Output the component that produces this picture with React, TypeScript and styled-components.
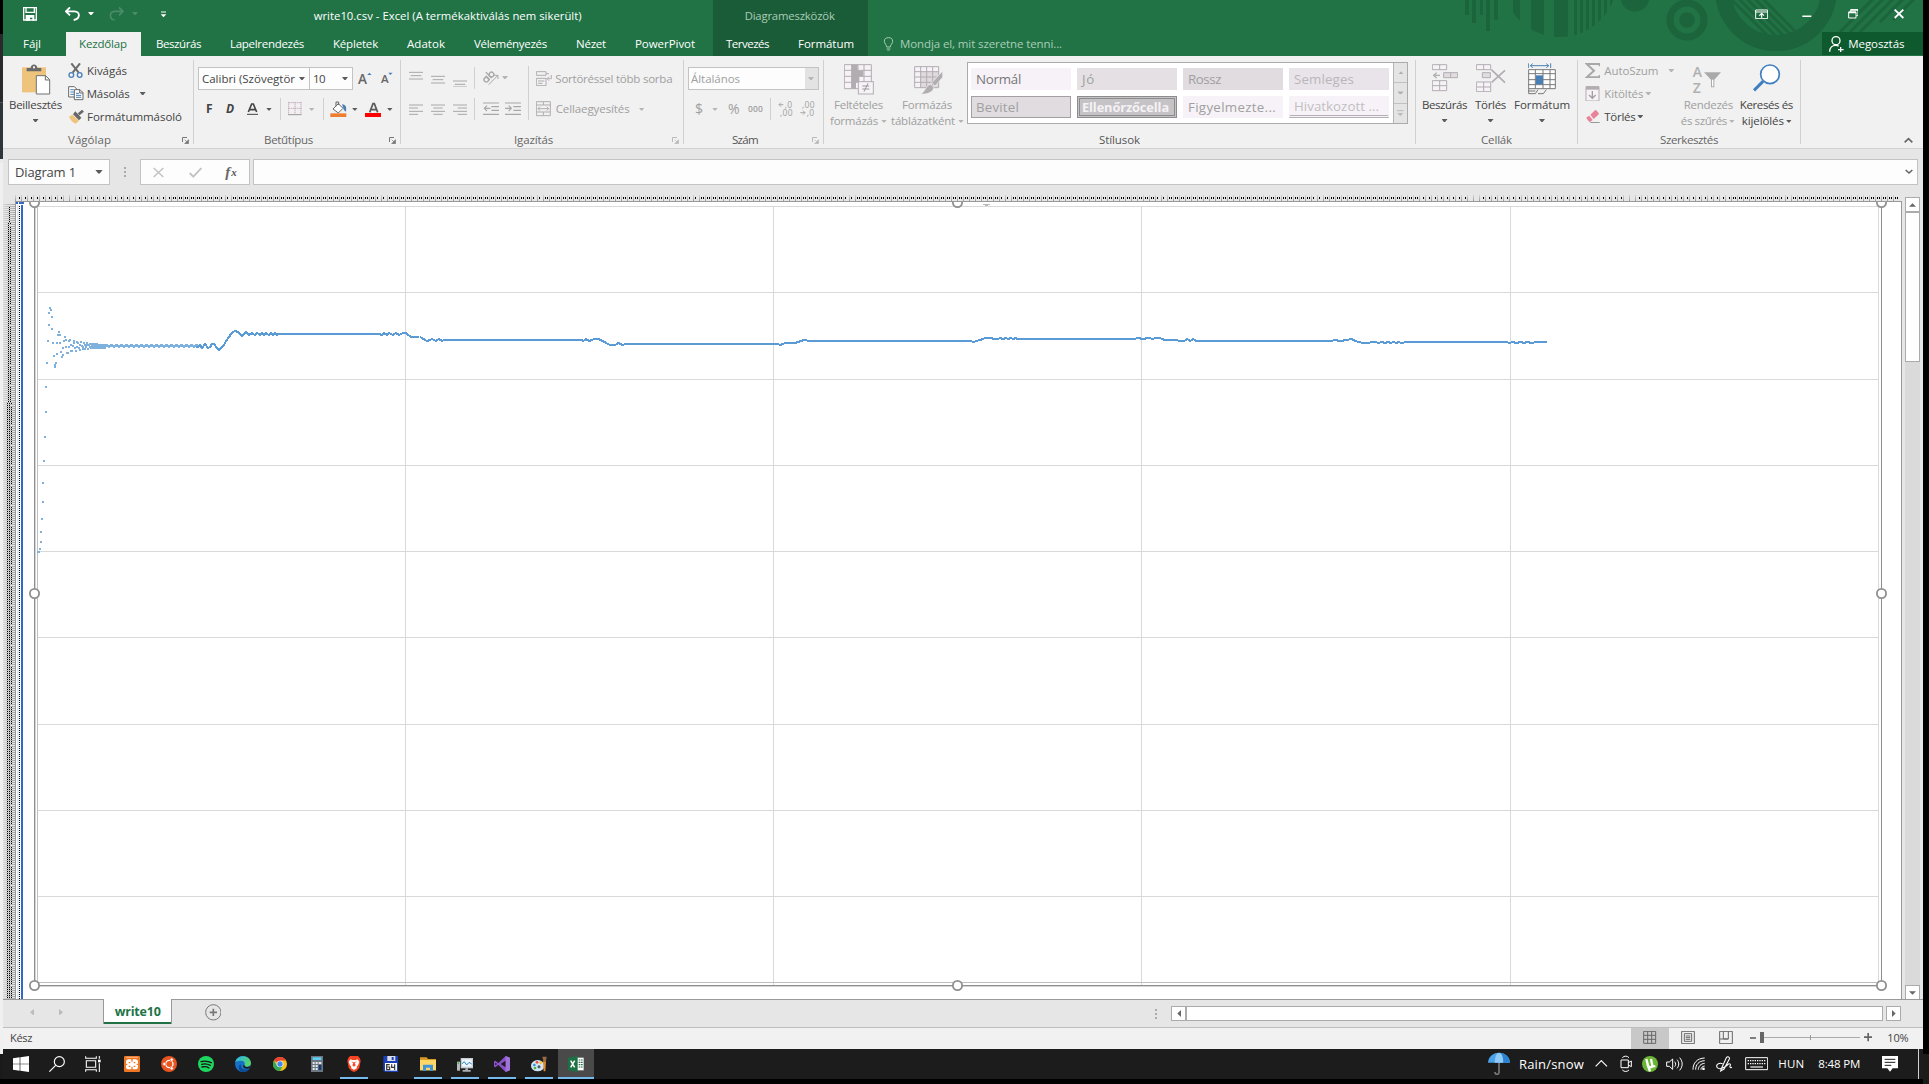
import React, { useLayoutEffect, useRef, useState, ReactNode } from "react";
import styled, { createGlobalStyle, css } from "styled-components";

const Global = createGlobalStyle`
  html, body { margin: 0; padding: 0; background: #000; overflow: hidden; }
  * { box-sizing: border-box; }
  svg { display: block; flex: none; }
`;

const UI = `"Open Sans", "Noto Sans", sans-serif`;

/* ---------- text fitted to a column width ---------- */

const TextBox = styled.span<{ $w: number; $s?: number; $c?: string; $b?: number; $i?: boolean; $ml?: number; $f?: string; $lh?: number }>`
  display: block;
  flex: none;
  width: ${(p) => p.$w}px;
  margin-left: ${(p) => p.$ml ?? 0}px;
  font-family: ${(p) => p.$f ?? UI};
  font-size: ${(p) => p.$s ?? 11.5}px;
  font-weight: ${(p) => p.$b ?? 400};
  font-style: ${(p) => (p.$i ? "italic" : "normal")};
  line-height: ${(p) => p.$lh ?? 16}px;
  color: ${(p) => p.$c ?? "#444"};
  white-space: nowrap;
`;

type TProps = { w: number; s?: number; c?: string; b?: number; i?: boolean; ml?: number; f?: string; lh?: number; children: string };

function T({ w, s, c, b, i, ml, f, lh, children }: TProps) {
  const ref = useRef<HTMLSpanElement>(null);
  const [ls, setLs] = useState(0);
  useLayoutEffect(() => {
    if (ref.current) {
      const natural = ref.current.getBoundingClientRect().width;
      setLs((w - natural) / children.length);
    }
  }, []);
  return (
    <TextBox $w={w} $s={s} $c={c} $b={b} $i={i} $ml={ml} $f={f} $lh={lh}>
      <span ref={ref} style={{ letterSpacing: ls }}>
        {children}
      </span>
    </TextBox>
  );
}

/* Icon artwork is drawn on a grid three times finer than the screen. */
const Svg = styled.svg<{ $ml?: number; $mt?: number }>`
  margin-left: ${(p) => p.$ml ?? 0}px;
  margin-top: ${(p) => p.$mt ?? 0}px;
`;
function Icon({ box, ml, mt, children }: { box: number[]; ml?: number; mt?: number; children: ReactNode }) {
  return (
    <Svg $ml={ml} $mt={mt} width={box[2] / 3} height={box[3] / 3} viewBox={box.join(" ")} fill="none">
      {children}
    </Svg>
  );
}

const Arrow = styled.i<{ $ml?: number; $c?: string; $mt?: number; $big?: boolean }>`
  display: block;
  flex: none;
  width: ${(p) => (p.$big ? 8 : 6)}px;
  height: ${(p) => (p.$big ? 4 : 3)}px;
  margin-left: ${(p) => p.$ml ?? 0}px;
  margin-top: ${(p) => p.$mt ?? 0}px;
  background: ${(p) => p.$c ?? "#5c5c5c"};
  clip-path: polygon(0 0, 100% 0, 60% 100%, 40% 100%);
`;

/* ---------- frame ---------- */

const Screen = styled.div`
  display: flex;
  width: 1929px;
  height: 1084px;
  background: #000;
  overflow: hidden;
  font-family: ${UI};
`;
const LeftEdge = styled.div`
  width: 3px;
  height: 1079px;
  background: linear-gradient(#000 0 34px, #2a2a2c 34px 102px, #50565c 102px 103px, #30353a 103px 159px, #e9e9e9 159px 163px, #f0f0f0 163px 1054px, #1a1a1a 1054px);
`;
const RightEdge = styled.div`
  width: 6px;
  height: 1084px;
  background: linear-gradient(#000 0 1054px, #1b1b1b 1054px);
`;
const Window = styled.div`
  display: flex;
  flex-direction: column;
  width: 1920px;
  height: 1079px;
  background: #e6e6e6;
`;

/* ---------- title and tabs ---------- */

const Header = styled.header`
  position: relative;
  height: 56px;
  background: #217346;
`;
const Decor = styled.svg`
  position: absolute;
  left: 1457px;
  top: 0;
`;
const HeadRow = styled.div<{ $h: number }>`
  position: relative;
  display: flex;
  align-items: center;
  height: ${(p) => p.$h}px;
`;
const ToolTabs = styled.div<{ $ml: number; $h: number; $pt?: number }>`
  display: flex;
  align-items: center;
  width: 155px;
  height: ${(p) => p.$h}px;
  margin-left: ${(p) => p.$ml}px;
  padding-top: ${(p) => p.$pt ?? 0}px;
  background: #1b5c38;
`;
const ActiveTab = styled.div`
  display: flex;
  align-items: center;
  width: 75px;
  height: 24px;
  margin-left: 25px;
  padding-left: 13px;
  background: #f1f1f1;
`;
const Share = styled.div`
  display: flex;
  align-items: center;
  align-self: flex-start;
  width: 101px;
  height: 23px;
  margin-left: auto;
  padding-left: 7px;
  background: #0e5a2e;
`;

function TitleArt() {
  const stripes = [1513, 1531, 1554, 1574, 1580, 1586, 1592, 1598, 1604, 1610];
  const widths = [7, 13, 14, 3, 3, 3, 3, 3, 3, 3];
  return (
    <Decor width="463" height="56" viewBox="1460 0 463 56" fill="#1c643c">
      <clipPath id="disc"><circle cx="1560" cy="-20" r="57" /></clipPath>
      <clipPath id="inner"><circle cx="1776" cy="-10" r="57" /></clipPath>
      <clipPath id="cut"><rect x="1460" y="0" width="463" height="51" /></clipPath>
      <path d="M1465 0h4v15h-4zM1472 0h4v23h-4zM1480 0h3v15h-3zM1486 0h4v31h-4zM1494 0h4v20h-4z" />
      <g clipPath="url(#disc)">
        {stripes.map((x, i) => <rect key={x} x={x} y="0" width={widths[i]} height="56" />)}
      </g>
      <circle cx="1635" cy="-3" r="14.5" />
      <circle cx="1687" cy="20" r="17" fill="none" stroke="#1c643c" strokeWidth="7" />
      <circle cx="1687" cy="20" r="7.7" />
      <g clipPath="url(#cut)">
        <circle cx="1776" cy="-10" r="53" fill="none" stroke="#1c643c" strokeWidth="16" />
      </g>
      <g clipPath="url(#inner)" stroke="#1c643c" strokeWidth="3">
        <path d="M1728 -4l60 60M1736 -4l60 60M1744 -4l60 60M1752 -4l60 60M1760 -4l60 60" />
      </g>
      <g stroke="#1c643c" strokeWidth="3">
        <path d="M1840 32l34-34M1850 32l34-34M1860 32l34-34M1880 22l24-24M1893 20l22-22" />
      </g>
    </Decor>
  );
}

function TopBar() {
  const w = "#fff";
  return (
    <Header>
      <TitleArt />
      <HeadRow $h={32}>
        <Icon box={[69, 22, 42, 42]} ml={20} mt={-4}>
          <path d="M71 24h38v37h-38zM78 24v14h25v-14" stroke={w} strokeWidth="4" />
          <path d="M77 46h26v17h-6v-9h-7v9h-13z" fill={w} />
        </Icon>
        <Icon box={[197, 20, 45, 42]} ml={28} mt={-5}>
          <path d="M212 21l-12 12 12 12M201 33h24c20 0 17 24-2 26" stroke={w} strokeWidth="5.5" />
        </Icon>
        <Arrow $ml={8} $c={w} $mt={-5} />
        <Icon box={[328, 20, 45, 42]} ml={15} mt={-5}>
          <path d="M358 21l12 12-12 12M369 33h-24c-18 0-16 24 0 26" stroke="#4b8c68" strokeWidth="5" />
        </Icon>
        <Arrow $ml={8} $c="#4b8c68" $mt={-5} />
        <Icon box={[480, 32, 20, 21]} ml={22} mt={-4}>
          <path d="M483 35h15" stroke={w} strokeWidth="3" /><path d="M482 42h17l-8.500 9z" fill={w} />
        </Icon>
        <T w={268} ml={147} s={11.3} c={w}>write10.csv - Excel (A termékaktiválás nem sikerült)</T>
        <ToolTabs $ml={131} $h={32}><T w={90} ml={32} s={11.3} c="#a9cdb6">Diagrameszközök</T></ToolTabs>
        <Icon box={[555, 26, 40, 32]} ml={887} mt={-4}>
          <path d="M557 29h36v26h-36zM557 35h36" stroke={w} strokeWidth="3" /><path d="M575 52v-11M568 46l7-7 7 7" stroke={w} strokeWidth="3.500" />
        </Icon>
        <Icon box={[698, 44, 29, 8]} ml={34} mt={0}><path d="M699 48h27" stroke={w} strokeWidth="5" /></Icon>
        <Icon box={[836, 27, 32, 30]} ml={36} mt={-4}>
          <path d="M838 36h22v18h-22zM844 35v-6h22v18h-5" stroke={w} strokeWidth="3" /><path d="M838 37h22M844 30h22" stroke={w} strokeWidth="5" />
        </Icon>
        <Icon box={[975, 28, 30, 29]} ml={36} mt={-4}><path d="M977 30l26 25M1003 30l-26 25" stroke={w} strokeWidth="5.500" /></Icon>
      </HeadRow>
      <HeadRow $h={24}>
        <T w={18} ml={20} c={w}>Fájl</T>
        <ActiveTab><T w={48} c="#217346">Kezdőlap</T></ActiveTab>
        <T w={45} ml={15} c={w}>Beszúrás</T>
        <T w={74} ml={29} c={w}>Lapelrendezés</T>
        <T w={45} ml={29} c={w}>Képletek</T>
        <T w={38} ml={29} c={w}>Adatok</T>
        <T w={73} ml={29} c={w}>Véleményezés</T>
        <T w={30} ml={29} c={w}>Nézet</T>
        <T w={60} ml={29} c={w}>PowerPivot</T>
        <ToolTabs $ml={18} $h={24}>
          <T w={43} ml={13} c={w}>Tervezés</T>
          <T w={56} ml={29} c={w}>Formátum</T>
        </ToolTabs>
        <Icon box={[190, 107, 33, 44]} ml={15}>
          <path d="M201 137c0-7-7-10-7-17a12.500 11 0 0 1 25 0c0 7-7 10-7 17zM201 143h11M203 149h7" stroke="#a9cdb6" strokeWidth="3" />
        </Icon>
        <T w={162} ml={6} c="#a9cdb6">Mondja el, mit szeretne tenni...</T>
        <Share>
          <Icon box={[777, 108, 46, 48]}>
            <circle cx="798" cy="122" r="12" stroke={w} strokeWidth="4" /><path d="M779 155c0-12 8-19 18-19 4 0 7 1 9 3M812 141v15M804 149h17" stroke={w} strokeWidth="4" />
          </Icon>
          <T w={56} ml={4} c={w}>Megosztás</T>
        </Share>
      </HeadRow>
    </Header>
  );
}

/* ---------- ribbon ---------- */

const Ribbon = styled.section`
  display: flex;
  height: 93px;
  background: #f1f1f1;
  border-bottom: 1px solid #d2d2d2;
`;
const Group = styled.div<{ $w: number }>`
  display: flex;
  flex-direction: column;
  flex: none;
  width: ${(p) => p.$w}px;
`;
const Sep = styled.i<{ $h: number; $mt?: number; $ml?: number }>`
  display: block;
  flex: none;
  width: 1px;
  height: ${(p) => p.$h}px;
  margin-top: ${(p) => p.$mt ?? 0}px;
  margin-left: ${(p) => p.$ml ?? 0}px;
  background: #d0d0d0;
`;
const Body = styled.div`
  display: flex;
  height: 76px;
`;
const Foot = styled.div`
  display: flex;
  align-items: center;
  height: 16px;
  padding-right: 4px;
`;
const Col = styled.div<{ $pt?: number; $ml?: number; $w?: number; $center?: boolean }>`
  display: flex;
  flex-direction: column;
  flex: none;
  ${(p) => p.$w && css`width: ${p.$w}px;`}
  ${(p) => p.$center && css`align-items: center;`}
  padding-top: ${(p) => p.$pt ?? 0}px;
  margin-left: ${(p) => p.$ml ?? 0}px;
`;
const Row = styled.div<{ $h: number; $mt?: number }>`
  display: flex;
  align-items: center;
  flex: none;
  height: ${(p) => p.$h}px;
  margin-top: ${(p) => p.$mt ?? 0}px;
`;
const Field = styled.div<{ $w: number; $ml?: number; $pl: number }>`
  display: flex;
  align-items: center;
  flex: none;
  width: ${(p) => p.$w}px;
  height: 23px;
  margin-left: ${(p) => p.$ml ?? 0}px;
  padding-left: ${(p) => p.$pl}px;
  background: #fdfdfd;
  border: 1px solid #c3c3c3;
`;
const DropZone = styled.div`
  display: flex;
  align-items: center;
  width: 13px;
  height: 21px;
  margin-left: auto;
  padding-left: 3px;
  background: #e3e3e3;
`;
const LargeIcon = styled.div`
  display: flex;
  align-items: flex-start;
  height: 33px;
`;

const G = "#b1adb1";
const DIS = "#a0a0a0";

function Launcher({ c = "#777" }: { c?: string }) {
  return (
    <Svg $mt={1} style={{ marginLeft: "auto" }} width="7" height="7" viewBox="0 0 21 21" fill="none">
      <path d="M1.500 15V1.500H15" stroke={c} strokeWidth="3" /><path d="M19.500 8v12H8zM8 8l8 8" fill={c} stroke={c} strokeWidth="2" />
    </Svg>
  );
}

function Lines({ d, ml, h = 42 }: { d: string; ml?: number; h?: number }) {
  return <Icon box={[0, 0, 42, h]} ml={ml}><path d={d} stroke="#a8a8a8" strokeWidth="3" /></Icon>;
}

function Clipboard() {
  return (
    <Group $w={190}>
      <Body>
        <Col $w={53} $ml={6} $pt={8} $center>
          <LargeIcon>
            <Icon box={[66, 191, 92, 92]}>
              <rect x="72" y="201" width="72" height="75" fill="#eec47c" />
              <path d="M86 213v-10h12c0-14 20-14 20 0h12v10z" fill="#6a6a6a" /><rect x="105" y="198" width="6" height="6" fill="#f1f1f1" />
              <path d="M115 226h28l12 12v43h-40zM142 226v13h13" fill="#fff" stroke="#707070" strokeWidth="3" />
            </Icon>
          </LargeIcon>
          <T w={53}>Beillesztés</T>
          <Arrow $mt={6} />
        </Col>
        <Col $ml={6} $pt={3}>
          <Row $h={23}>
            <Icon box={[205, 187, 45, 45]}>
              <path d="M215 188l22 28M241 188l-22 28" stroke="#6b6b6b" strokeWidth="6" />
              <circle cx="215" cy="223" r="7" stroke="#4a7fb5" strokeWidth="4" /><circle cx="240" cy="223" r="7" stroke="#4a7fb5" strokeWidth="4" />
            </Icon>
            <T w={40} ml={4}>Kivágás</T>
          </Row>
          <Row $h={23}>
            <Icon box={[203, 258, 47, 43]}>
              <path d="M205 260h17l8 8v23h-25z" fill="#fff" stroke="#666" strokeWidth="3" />
              <path d="M210 269h10M210 276h12M210 283h12" stroke="#4a7fb5" strokeWidth="3" />
              <path d="M222 269h17l9 9v21h-26zM238 269v10h10" fill="#fff" stroke="#666" strokeWidth="3" />
              <path d="M227 280h9M227 286h16M227 292h16" stroke="#4a7fb5" strokeWidth="3" />
            </Icon>
            <T w={43} ml={3}>Másolás</T><Arrow $ml={10} />
          </Row>
          <Row $h={23}>
            <Icon box={[204, 327, 48, 42]}>
              <path d="M207 347l10-6 20 18-10 9c-8-3-15-10-20-21z" fill="#eec47c" />
              <path d="M219 340l7-9 18 19-7 8z" fill="#666" /><path d="M236 340l13-11" stroke="#666" strokeWidth="8" />
            </Icon>
            <T w={95} ml={3}>Formátummásoló</T>
          </Row>
        </Col>
      </Body>
      <Foot><T w={43} ml={65} c="#666">Vágólap</T><Launcher /></Foot>
    </Group>
  );
}

function FontGroup() {
  return (
    <Group $w={206}>
      <Body>
        <Col $pt={11} $ml={4}>
          <Row $h={23}>
            <Field $w={112} $pl={3}><T w={93}>Calibri (Szövegtör</T><Arrow $ml={4} /></Field>
            <Field $w={44} $pl={3} $ml={-1}><T w={12}>10</T><Arrow $ml={17} /></Field>
            <T w={9} ml={5} s={13.5} b={600} c="#666">A</T>
            <Icon box={[0, 0, 15, 38]}><path d="M1 9l6-7 7 7z" fill="#4a7fb5" /></Icon>
            <T w={7} ml={9} s={11.5} b={600} c="#666">A</T>
            <Icon box={[0, 0, 15, 38]}><path d="M1 2l6 7 7-7z" fill="#4a7fb5" /></Icon>
          </Row>
          <Row $h={24} $mt={7}>
            <T w={7} ml={8} s={12} b={700}>F</T>
            <T w={10} ml={13} s={12} b={700} i>D</T>
            <Col $ml={11} $w={11}>
              <Icon box={[741, 310, 33, 36]}>
                <path d="M745 337l10-24h5l10 24M749 330h17" stroke="#444" strokeWidth="5" /><path d="M741 344h33" stroke="#444" strokeWidth="3" />
              </Icon>
            </Col>
            <Arrow $ml={8} />
            <Sep $h={22} $ml={8} />
            <Icon box={[866, 306, 41, 40]} ml={7}>
              <path d="M868 307v34M887 307v34M905 307v34M868 308h38M868 325h38" stroke="#b58fa9" strokeWidth="3" strokeDasharray="3 3" /><path d="M866 344h41" stroke="#999" strokeWidth="3" />
            </Icon>
            <Arrow $ml={7} $c="#b5b5b5" />
            <Sep $h={22} $ml={8} />
            <Icon box={[992, 302, 50, 49]} ml={6.5}>
              <path d="M1001 326l16-16 14 14-14 14z" fill="#fff" stroke="#666" strokeWidth="3" /><path d="M1010 318v-13h8v9" stroke="#666" strokeWidth="3" />
              <path d="M1028 312c13 2 14 9 12 22-5-1-7-6-8-10z" fill="#4a7fb5" /><rect x="993" y="339" width="48" height="12" fill="#ed7d31" />
            </Icon>
            <Arrow $ml={5} />
            <Icon box={[1095, 306, 48, 45]} ml={7}>
              <path d="M1109 337l10-26h4l10 26M1113 329h17" stroke="#5a5a5a" strokeWidth="5" /><rect x="1095" y="339" width="48" height="12" fill="#f00" />
            </Icon>
            <Arrow $ml={6} />
          </Row>
        </Col>
      </Body>
      <Foot><T w={49} ml={70} c="#666">Betűtípus</T><Launcher /></Foot>
    </Group>
  );
}

function AlignGroup() {
  return (
    <Group $w={282}>
      <Body>
        <Col $pt={10} $ml={8}>
          <Row $h={23}>
            <Lines h={54} d="M0 10h42M5 20h32M0 30h42" /><Lines ml={8} h={54} d="M0 22h42M5 32h32M0 42h42" /><Lines ml={8} h={54} d="M0 36h42M5 46h32M0 54h42" />
            <Sep $h={22} $ml={7} />
            <Icon box={[248, 210, 51, 48]} ml={7}>
              <g transform="rotate(-45 268 232)" stroke="#a8a8a8" strokeWidth="4"><circle cx="258" cy="232" r="7" /><path d="M265 222v18M273 215v25" /><circle cx="280" cy="232" r="7" /></g>
              <path d="M268 254l27-27M296 237v-11h-11" stroke="#a8a8a8" strokeWidth="3" />
            </Icon>
            <Arrow $ml={3} $c="#b5b5b5" />
          </Row>
          <Row $h={24} $mt={8}>
            <Lines d="M0 9h42M0 18h27M0 28h42M0 37h27" /><Lines ml={8} d="M0 9h42M7 18h28M0 28h42M7 37h28" /><Lines ml={8} d="M0 9h42M14 18h28M0 28h42M14 37h28" />
            <Sep $h={22} $ml={7} />
            <Icon box={[0, 0, 50, 42]} ml={7.5}><path d="M0 3h48M25 14h23M25 25h23M0 37h48M22 19H4M12 11l-8 8 8 8" stroke="#a8a8a8" strokeWidth="3.500" /></Icon>
            <Icon box={[0, 0, 50, 42]} ml={5.5}><path d="M0 3h48M25 14h23M25 25h23M0 37h48M0 19h18M11 11l8 8-8 8" stroke="#a8a8a8" strokeWidth="3.500" /></Icon>
          </Row>
        </Col>
        <Sep $h={54} $mt={10} $ml={7} />
        <Col $pt={11} $ml={7}>
          <Row $h={23}>
            <Icon box={[408, 210, 48, 46]}>
              <path d="M409 212h29v11h-29zM409 232h29v22h-29zM438 218h9M414 240h19M414 247h13M454 222v11h-12M447 227l-6 6 6 6" stroke={G} strokeWidth="3" />
            </Icon>
            <T w={117} ml={3} c={DIS}>Sortöréssel több sorba</T>
          </Row>
          <Row $h={24} $mt={7}>
            <Icon box={[408, 303, 46, 46]}>
              <path d="M409 305h42v42h-42zM409 315h42M409 336h42M430 305v10M430 336v11M414 326h32M420 320l-6 6 6 6M440 320l6 6-6 6" stroke={G} strokeWidth="3" />
            </Icon>
            <T w={74} ml={4} c={DIS}>Cellaegyesítés</T><Arrow $ml={9} $c="#b5b5b5" />
          </Row>
        </Col>
      </Body>
      <Foot><T w={39} ml={113} c="#666">Igazítás</T><Launcher c="#bbb" /></Foot>
    </Group>
  );
}

function NumberGroup() {
  return (
    <Group $w={139}>
      <Body>
        <Col $pt={11} $ml={4}>
          <Row $h={23}>
            <Field $w={131} $pl={2}><T w={49} c={DIS}>Általános</T><DropZone><Arrow $c="#b5b5b5" /></DropZone></Field>
          </Row>
          <Row $h={24} $mt={7}>
            <T w={8} ml={7} s={14} c={DIS}>$</T><Arrow $ml={9} $c="#b5b5b5" />
            <T w={13} ml={10} s={14} c={DIS}>%</T>
            <T w={15} ml={7} s={8.5} b={600} c={DIS}>000</T>
            <Sep $h={22} $ml={7} />
            <Col $ml={7} $w={15}>
              <Row $h={8}>
                <Icon box={[0, 0, 20, 18]}><path d="M16 8H3M9 2L3 8l6 6" stroke="#a8a8a8" strokeWidth="3" /></Icon>
                <T w={8} s={8.5} lh={8} c={DIS}>,0</T>
              </Row>
              <Row $h={8}><T w={13} s={8.5} lh={8} ml={2} c={DIS}>,00</T></Row>
            </Col>
            <Col $ml={7} $w={15}>
              <Row $h={8}><T w={13} s={8.5} lh={8} ml={2} c={DIS}>,00</T></Row>
              <Row $h={8}>
                <Icon box={[0, 0, 20, 18]}><path d="M1 8h14M9 2l6 6-6 6" stroke="#a8a8a8" strokeWidth="3" /></Icon>
                <T w={8} s={8.5} lh={8} c={DIS}>,0</T>
              </Row>
            </Col>
          </Row>
        </Col>
      </Body>
      <Foot><T w={26} ml={48} c="#555">Szám</T><Launcher c="#bbb" /></Foot>
    </Group>
  );
}

const Gallery = styled.div`
  display: flex;
  width: 441px;
  height: 62px;
  margin: 6px 0 0 3px;
  background: #fff;
  border: 1px solid #ababab;
`;
const Swatches = styled.div`
  display: grid;
  grid-template-columns: repeat(4, 100px);
  grid-auto-rows: 22px;
  gap: 6px;
  padding: 5px 3px;
  width: 425px;
`;
const Swatch = styled.div<{ $bg: string; $kind?: string }>`
  display: flex;
  align-items: center;
  height: 22px;
  padding-left: 4px;
  background: ${(p) => p.$bg};
  border: 1px solid ${(p) => p.$bg};
  ${(p) => p.$kind === "box" && css`border: 1px solid #a3a0a3;`}
  ${(p) => p.$kind === "double" && css`border: 3px double #8c8c8c; padding-left: 2px;`}
  ${(p) => p.$kind === "link" && css`border-bottom: 3px double #b5b0b5;`}
`;
const GalleryBtns = styled.div`
  display: flex;
  flex-direction: column;
  width: 14px;
  background: #e4e4e4;
  border-left: 1px solid #b5b5b5;
`;
const GalleryBtn = styled.div`
  display: flex;
  align-items: center;
  justify-content: center;
  flex: 1;
  & + & { border-top: 1px solid #c0c0c0; }
`;

function StyleGroup() {
  return (
    <Group $w={591}>
      <Body>
        <Col $ml={6} $w={57} $pt={8}>
          <LargeIcon>
            <Icon box={[72, 191, 90, 92]} ml={14}>
              <path d="M73 193h81v72h-81z" fill="#f7f2f7" /><path d="M95 193h18v18h17v17h-12v18h-10v19h-13z" fill="#b1adb1" />
              <path d="M73 193h81v72h-81zM73 210h81M73 228h81M73 246h81M95 193v72M132 193v72M114 193v18" stroke={G} strokeWidth="3" />
              <rect x="115" y="244" width="45" height="37" fill="#f7f2f7" stroke={G} strokeWidth="3" /><path d="M127 257h21M127 266h21M144 249l-12 25" stroke="#999" strokeWidth="3" />
            </Icon>
          </LargeIcon>
          <T w={49} ml={4} c={DIS}>Feltételes</T>
          <Row $h={16}><T w={48} c={DIS}>formázás</T><Arrow $ml={3} $c="#b5b5b5" /></Row>
        </Col>
        <Col $ml={4} $w={73} $pt={8}>
          <LargeIcon>
            <Icon box={[282, 191, 90, 92]} ml={23}>
              <path d="M284 199h72v63h-72z" fill="#f7f2f7" /><path d="M302 214h54v48h-54z" fill="#dedade" />
              <path d="M284 199h72v63h-72zM284 214h72M284 230h72M284 246h72M302 199v63M320 199v63M338 199v63" stroke={G} strokeWidth="3" />
              <path d="M368 212v19l-23 26-10-9zM332 252l10 9c-3 15-20 22-40 20 14-6 15-26 30-29z" fill={G} stroke="#f1f1f1" strokeWidth="2" />
            </Icon>
          </LargeIcon>
          <T w={50} ml={11} c={DIS}>Formázás</T>
          <Row $h={16}><T w={64} c={DIS}>táblázatként</T><Arrow $ml={3} $c="#b5b5b5" /></Row>
        </Col>
        <Gallery>
          <Swatches>
            <Swatch $bg="#f6f2f7"><T w={45} s={13.3} c="#777">Normál</T></Swatch>
            <Swatch $bg="#e5e0e4"><T w={13} s={13.3} c={DIS}>Jó</T></Swatch>
            <Swatch $bg="#e0dce0"><T w={33} s={13.3} c={DIS}>Rossz</T></Swatch>
            <Swatch $bg="#e9e4e9"><T w={60} s={13.3} c="#b9b6b9">Semleges</T></Swatch>
            <Swatch $bg="#e0dce0" $kind="box"><T w={43} s={13.3} c={DIS}>Bevitel</T></Swatch>
            <Swatch $bg="#c6c3c6" $kind="double"><T w={87} s={12.8} b={700} c="#f5f2f5">Ellenőrzőcella</T></Swatch>
            <Swatch $bg="#f6f2f7"><T w={88} s={13.3} c={DIS}>Figyelmezte...</T></Swatch>
            <Swatch $bg="#f6f2f7" $kind="link"><T w={85} s={13.3} c="#c2bec2">Hivatkozott ...</T></Swatch>
          </Swatches>
          <GalleryBtns>
            <GalleryBtn><Icon box={[0, 0, 18, 10]}><path d="M1 10l8-9 8 9z" fill="#b0b0b0" /></Icon></GalleryBtn>
            <GalleryBtn><Arrow $c="#b0b0b0" /></GalleryBtn>
            <GalleryBtn><Icon box={[0, 0, 20, 20]}><path d="M0 2h20" stroke="#bbb" strokeWidth="3" /><path d="M1 9h18l-9 10z" fill="#bbb" /></Icon></GalleryBtn>
          </GalleryBtns>
        </Gallery>
      </Body>
      <Foot><T w={41} ml={275} c="#555">Stílusok</T></Foot>
    </Group>
  );
}

function CellGroup() {
  return (
    <Group $w={161}>
      <Body>
        <Col $w={45} $ml={6} $pt={8} $center>
          <LargeIcon>
            <Icon box={[576, 191, 80, 84]} ml={1}>
              <path d="M577 193h43v15h-43zM599 193v15M577 241h43v30h-43zM577 256h43M599 241v30" fill="#f7f2f7" stroke={G} strokeWidth="3" />
              <path d="M611 217h42v15h-42zM632 217v15" fill="#e0dce0" stroke={G} strokeWidth="3" /><path d="M600 225h-18M590 217l-9 8 9 8" stroke={G} strokeWidth="4" />
            </Icon>
          </LargeIcon>
          <T w={45} c="#444">Beszúrás</T><Arrow $mt={6} />
        </Col>
        <Col $w={31} $ml={8} $pt={8} $center>
          <LargeIcon>
            <Icon box={[711, 191, 89, 84]} ml={1}>
              <path d="M712 193h43v15h-43zM734 193v15M712 245h43v29h-43zM712 260h43M734 245v29" fill="#f7f2f7" stroke={G} strokeWidth="3" />
              <path d="M730 217h24v15h-24z" fill="#e0dce0" stroke={G} strokeWidth="3" /><path d="M757 208l41 39M798 210l-40 36" stroke={G} strokeWidth="5" />
            </Icon>
          </LargeIcon>
          <T w={31}>Törlés</T><Arrow $mt={6} />
        </Col>
        <Col $w={56} $ml={8} $pt={7} $center>
          <LargeIcon>
            <Icon box={[864, 188, 86, 96]}>
              <path d="M866 208h80v57h-80zM866 220h80M866 238h80M866 253h80M886 208v57M909 208v57M930 208v57" fill="#fff" stroke="#777" strokeWidth="3" />
              <rect x="888" y="225" width="21" height="27" fill="#4a7fb5" /><path d="M866 265v15h20l8-12M894 280h16l9-12M866 272h20" stroke="#777" strokeWidth="3" />
              <path d="M865 189v14M932 189v14M870 196h57M878 190l-7 6 7 6M919 190l7 6-7 6" stroke="#4a7fb5" strokeWidth="3" />
            </Icon>
          </LargeIcon>
          <Row $h={16} $mt={1}><T w={56}>Formátum</T></Row><Arrow $mt={6} />
        </Col>
      </Body>
      <Foot><T w={31} ml={65} c="#666">Cellák</T></Foot>
    </Group>
  );
}

function EditGroup() {
  return (
    <Group $w={222}>
      <Body>
        <Col $ml={7} $pt={3}>
          <Row $h={23}>
            <Icon box={[45, 186, 46, 46]}><path d="M89 196v-7H50l22 20-22 20h39v-7" stroke="#a8a8a8" strokeWidth="6" /></Icon>
            <T w={54} ml={4} c={DIS}>AutoSzum</T><Arrow $ml={10} $c="#b5b5b5" />
          </Row>
          <Row $h={23}>
            <Icon box={[46, 256, 46, 47]}><path d="M49 258h39v43h-39z" fill="#f7f2f7" stroke={G} strokeWidth="3" /><path d="M49 262h39" stroke={G} strokeWidth="10" /><path d="M68 271v22M58 283l10 10 10-10" stroke="#a0a0a0" strokeWidth="4" /></Icon>
            <T w={39} ml={4} c={DIS}>Kitöltés</T><Arrow $ml={2} $c="#b5b5b5" />
          </Row>
          <Row $h={23}>
            <Icon box={[46, 327, 46, 40]}>
              <path d="M62 341l14-13c2-1 3-1 5 1l6 7c1 2 1 4-1 5L72 354z" fill="#e8849a" /><path d="M59 344l10 13-9 7-9-11c-1-2-1-3 0-4z" fill="#e8849a" /><path d="M62 365h28" stroke="#888" strokeWidth="3" />
            </Icon>
            <T w={31} ml={4}>Törlés</T><Arrow $ml={2} />
          </Row>
        </Col>
        <Col $ml={6.5} $w={54} $pt={8}>
          <LargeIcon>
            <Col $ml={12} $w={11}><T w={10} s={14} b={600} c="#b0b0b0">A</T><T w={9} s={14} b={600} c="#b0b0b0">Z</T></Col>
            <Icon box={[405, 191, 52, 84]}><path d="M405 216h51l-20 22v23h-10v-23z" fill="#aaa" /><path d="M429 238h4v20h-4z" fill="#fff" /></Icon>
          </LargeIcon>
          <T w={49} ml={3} c={DIS}>Rendezés</T>
          <Row $h={16}><T w={46} c={DIS}>és szűrés</T><Arrow $ml={2} $c="#b5b5b5" /></Row>
        </Col>
        <Col $ml={5} $w={55} $pt={8}>
          <LargeIcon>
            <Icon box={[549, 191, 84, 84]} ml={13}><circle cx="600" cy="222" r="28" fill="#fff" stroke="#3f7fc0" strokeWidth="5" /><path d="M579 243l-27 27" stroke="#3f7fc0" strokeWidth="9" /></Icon>
          </LargeIcon>
          <T w={53}>Keresés és</T>
          <Row $h={16}><T w={42} ml={2}>kijelölés</T><Arrow $ml={2} /></Row>
        </Col>
      </Body>
      <Foot><T w={58} ml={82} c="#666">Szerkesztés</T></Foot>
    </Group>
  );
}

const RibbonEnd = styled.div`
  display: flex;
  flex: 1;
  align-items: flex-end;
  justify-content: flex-end;
  padding: 0 10px 5px 0;
`;

/* ---------- formula bar ---------- */

const FormulaBar = styled.section`
  display: flex;
  align-items: center;
  height: 46px;
  padding: 0 5px;
  background: #e6e6e6;
`;
const Box = styled.div<{ $w?: number; $ml?: number }>`
  display: flex;
  align-items: center;
  ${(p) => (p.$w ? css`width: ${p.$w}px; flex: none;` : css`flex: 1;`)}
  height: 26px;
  margin-left: ${(p) => p.$ml ?? 0}px;
  background: #fdfdfd;
  border: 1px solid #c3c3c3;
`;
const Dots = styled.i<{ $ml: number }>`
  display: block;
  flex: none;
  width: 2px;
  height: 10px;
  margin-left: ${(p) => p.$ml}px;
  background: repeating-linear-gradient(#ababab 0 2px, transparent 2px 4px);
`;

/* ---------- sheet ---------- */

const ColumnRuler = styled.svg`
  background: #e6e6e6;
`;
const SheetArea = styled.section`
  display: flex;
  height: 798px;
  background: #e6e6e6;
`;

function ColumnHeads() {
  const marks: ReactNode[] = [];
  const thin = (n: number) => n === 8 || n === 9;
  for (let c = 0; c < 314; c++) {
    const x = 12 + 6 * c;
    marks.push(<rect key={"t" + c} x={x} y="0" width="1" height="7" fill="url(#tick)" />);
    const hi = Math.floor(c / 26) - 1;
    const lo = c % 26;
    if (c < 26) {
      if (!thin(lo)) marks.push(<rect key={c} x={x + 4} y="2" width="1" height="2" />);
    } else {
      if (!thin(hi)) marks.push(<rect key={"a" + c} x={x + 2} y="2" width="1" height="2" />);
      if (!thin(lo)) marks.push(<rect key={"b" + c} x={x + 4} y="2" width="1" height="2" />);
    }
  }
  return (
    <ColumnRuler width="1902" height="6" viewBox="0 0 1902 6" shapeRendering="crispEdges">
      <linearGradient id="tick" gradientUnits="userSpaceOnUse" x1="0" y1="0" x2="0" y2="6"><stop offset="0" stopColor="#d6d6d6" /><stop offset="1" stopColor="#9a9a9a" /></linearGradient>
      {marks}
    </ColumnRuler>
  );
}

function RowHeads() {
  const marks: ReactNode[] = [];
  for (let n = 0; n < 398; n++) {
    const y = 2 * n + 2;
    marks.push(<rect key={"t" + n} x="0" y={y + 1} width="12" height="1" fill="url(#side)" />);
    if (n === 0) continue;
    const digits = String(n).split("");
    const x0 = digits.length === 1 ? 6 : digits.length === 2 ? 5 : 4;
    digits.forEach((d, i) => {
      if (!(i === digits.length - 1 && d === "1")) marks.push(<rect key={n + "-" + i} x={x0 + 2 * i} y={y} width="1" height="1" />);
    });
  }
  return (
    <svg width="13" height="798" viewBox="0 0 13 798" shapeRendering="crispEdges">
      <linearGradient id="side" gradientUnits="userSpaceOnUse" x1="0" y1="0" x2="12" y2="0"><stop offset="0" stopColor="#d6d6d6" /><stop offset="1" stopColor="#a5a5a5" /></linearGradient>
      {marks}
      <rect x="12" y="0" width="1" height="798" fill="#999" />
    </svg>
  );
}

const scatter = [
  115, 1086, 118, 1086, 120, 1077, 123, 1056, 123, 1026, 126, 987, 129, 936, 129, 879, 132, 813, 135, 741, 138, 666, 138, 591,
  141, 519, 144, 453, 147, 405, 147, 369, 150, 354, 153, 360, 156, 381, 156, 417, 159, 459, 162, 498, 165, 525, 165, 531, 168, 519,
  171, 492, 171, 459, 174, 435, 177, 426, 180, 435, 180, 459, 183, 486, 186, 501, 189, 495, 189, 474, 192, 453, 195, 441, 198, 450,
  198, 471, 201, 489, 204, 489, 207, 471, 207, 453, 210, 450, 213, 465, 213, 483, 216, 483, 219, 468, 222, 453, 222, 459, 225, 474,
  228, 483, 231, 471, 231, 456, 234, 459, 237, 474, 240, 480, 240, 465, 243, 456, 246, 468, 249, 477, 249, 471, 252, 459, 255, 465,
  255, 477, 258, 471, 261, 459, 264, 465, 264, 477, 267, 465, 270, 462, 273, 474, 276, 465, 270, 471, 258, 465,
];

const traceA = [588, 470, 594, 470, 600, 465, 606, 473, 615, 463, 624, 474, 630, 471, 636, 462, 642, 462, 656, 481, 663, 474, 672, 465, 678, 453, 687, 441, 695, 429, 705, 422, 713, 427, 725, 438, 738, 427, 747, 435, 756, 430, 764, 435, 772, 429, 780, 434, 786, 430, 792, 435, 798, 430, 806, 435, 812, 430, 818, 434, 824, 430, 830, 434, 836, 432, 1137, 432, 1146, 435, 1152, 430, 1161, 435, 1168, 428, 1178, 435, 1187, 428, 1198, 435, 1208, 428, 1217, 428, 1233, 441, 1258, 441];
const traceB = [78, 36, 97, 48, 110, 41, 120, 47, 128, 41, 136, 47, 142, 45, 500, 45, 505, 47, 512, 42, 520, 47, 535, 41, 545, 41, 575, 60, 588, 60, 597, 54, 607, 60, 615, 57, 1012, 57, 1020, 60, 1033, 54, 1058, 53, 1082, 45, 1095, 48, 1515, 48, 1525, 51, 1541, 45];
const traceC = [0, 45, 15, 39, 30, 39, 37, 42, 47, 42, 55, 38, 62, 42, 70, 39, 77, 42, 83, 39, 90, 42, 97, 39, 101, 42, 415, 42, 430, 39, 437, 42, 458, 38, 465, 42, 478, 38, 485, 39, 500, 45, 530, 45, 540, 48, 552, 48, 560, 43, 568, 48, 576, 43, 584, 47, 590, 47, 950, 47, 957, 44, 975, 48, 990, 45, 1005, 43, 1015, 48, 1035, 54, 1050, 54, 1058, 50, 1068, 51, 1077, 54, 1087, 50, 1095, 54, 1103, 50, 1110, 54, 1118, 50, 1125, 54, 1132, 51, 1140, 54, 1150, 51, 1425, 51, 1430, 54, 1440, 51, 1450, 55, 1462, 50, 1470, 54, 1480, 50, 1490, 55, 1505, 50, 1532, 51];

function toPoints(list: number[], ox: number, sx: number, oy: number) {
  const out: string[] = [];
  for (let i = 0; i < list.length; i += 2) out.push(`${(ox + list[i] / sx).toFixed(1)},${Math.round(oy + list[i + 1] / 3)}`);
  return out.join(" ");
}

function Chart() {
  const dots: ReactNode[] = [];
  for (let i = 0; i < scatter.length; i += 2)
    dots.push(<rect key={i} x={Math.round(scatter[i] / 3 - 1)} y={Math.round(190 + scatter[i + 1] / 3 - 1)} width="2" height="2" />);
  for (let x = 91; x < 198; x += 1) {
    if (x < 106) {
      if (x % 3 !== 2) dots.push(<rect key={"u" + x} x={x} y={x < 97 ? 343 : 344} width="2" height="2" />);
      if (x % 4 !== 1) dots.push(<rect key={"l" + x} x={x} y={347} width="2" height="2" />);
      if (x % 2) dots.push(<rect key={"m" + x} x={x} y={345} width="2" height="2" />);
    } else {
      dots.push(<rect key={"m" + x} x={x} y={345} width="1" height="2" />);
      if (x % 5 < 3) dots.push(<rect key={"u" + x} x={x} y={344} width="1" height="1" />);
      else dots.push(<rect key={"l" + x} x={x} y={347} width="1" height="1" />);
    }
  }
  return (
    <svg width="1886" height="798" viewBox="16 201 1886 798">
      <rect x="16" y="201" width="1886" height="798" fill="#fff" />
      <g shapeRendering="crispEdges">
        <rect x="17" y="205" width="2" height="794" fill="#e3e9f3" />
        {Array.from({ length: 397 }, (_, i) => <rect key={i} x="19" y={206 + 2 * i} width="1" height="1" fill="#000" />)}
        <rect x="21" y="205" width="2" height="794" fill="#3069c8" />
        <path d="M16 202h2v2h-2zM19 202h5v2h-5z" fill="#3069c8" />
        <g fill="#d9d9d9">
          {[206, 292, 379, 465, 551, 637, 724, 810, 896].map((y) => <rect key={y} x="37" y={y} width="1842" height="1" />)}
          {[405, 773, 1141, 1510].map((x) => <rect key={x} x={x} y="206" width="1" height="779" />)}
        </g>
        <rect x="37" y="206" width="1" height="777" fill="#c0c0c0" />
        <rect x="1878" y="206" width="1" height="777" fill="#d9d9d9" />
        <rect x="37" y="982" width="1842" height="1" fill="#bdbdbd" />
        <rect x="34" y="203" width="1" height="783" fill="#8f8f8f" />
        <rect x="35" y="203" width="1" height="783" fill="#d4d4d4" />
        <rect x="1881" y="203" width="1" height="783" fill="#8f8f8f" />
        <rect x="34" y="985" width="1848" height="1" fill="#8f8f8f" />
        <rect x="34" y="986" width="1848" height="1" fill="#d4d4d4" />
        <rect x="16" y="201" width="1886" height="1" fill="#999" />
        <rect x="1901" y="201" width="1" height="798" fill="#999" />
        <path d="M983 204h7M985 205h3" stroke="#b9b9b9" />
        <g fill="#7fb1df">{dots}</g>
      </g>
      <g fill="none" stroke="#5b9bd5" strokeWidth="2" shapeRendering="crispEdges">
        <polyline points={toPoints(traceA, 0, 3, 190)} />
        <polyline points={toPoints(traceB, 390, 2.613, 325)} />
        <polyline points={toPoints(traceC, 980, 2.703, 325)} />
      </g>
      <clipPath id="sheetClip"><rect x="16" y="202" width="1886" height="797" /></clipPath>
      <g clipPath="url(#sheetClip)" fill="#fff" stroke="#8f8f8f" strokeWidth="1.800">
        {[[34.5, 202.5], [957.5, 202.5], [1881.5, 202.5], [34.5, 593.5], [1881.5, 593.5], [34.5, 985.5], [957.5, 985.5], [1881.5, 985.5]].map(([x, y]) => (
          <circle key={x + "," + y} cx={x} cy={y} r="4.600" />
        ))}
      </g>
    </svg>
  );
}

const VScroll = styled.div`
  display: flex;
  flex-direction: column;
  width: 15px;
  height: 803px;
  margin: -4px 0 0 3px;
  background: #dadada;
`;
const ScrollBtn = styled.div<{ $ml?: number }>`
  display: flex;
  align-items: center;
  justify-content: center;
  flex: none;
  width: 15px;
  height: 15px;
  margin-left: ${(p) => p.$ml ?? 0}px;
  background: #fff;
  border: 1px solid #ababab;
`;
const VThumb = styled.div`
  height: 150px;
  background: #fff;
  border: 1px solid #ababab;
`;
const Spacer = styled.div`
  flex: 1;
`;

/* ---------- sheet tabs and status ---------- */

const SheetTabs = styled.section`
  display: flex;
  align-items: center;
  height: 29px;
  background: linear-gradient(#999 0 1px, #e6e6e6 1px 28px, #bdbdbd 28px);
`;
const SheetTab = styled.div`
  align-self: flex-start;
  width: 69px;
  height: 25px;
  margin-left: 39px;
  padding: 5px 0 0 11px;
  background: #fff;
  border: solid #999;
  border-width: 0 1px;
  box-shadow: inset 0 -2px #217346;
`;
const HThumb = styled.div`
  width: 698px;
  height: 15px;
  margin-left: -1px;
  background: #fff;
  border: 1px solid #ababab;
  border-left-width: 2px;
`;
const Status = styled.section`
  display: flex;
  align-items: center;
  height: 21px;
  padding-bottom: 2px;
  background: #f1f1f1;
`;
const ViewBtn = styled.div<{ $on?: boolean; $ml?: number }>`
  display: flex;
  align-items: center;
  justify-content: center;
  width: 38px;
  height: 21px;
  margin: 0 0 -2px ${(p) => p.$ml ?? 0}px;
  padding-bottom: 2px;
  background: ${(p) => (p.$on ? "#c8c8c8" : "transparent")};
`;

/* ---------- taskbar ---------- */

const Taskbar = styled.footer`
  display: flex;
  align-items: center;
  height: 30px;
  background: #1c1c1c;
`;
const Task = styled.div<{ $open?: boolean; $active?: boolean; $ml?: number }>`
  display: flex;
  align-items: center;
  justify-content: center;
  flex: none;
  width: 36px;
  height: 30px;
  margin-left: ${(p) => p.$ml ?? 0}px;
  background: ${(p) => (p.$active ? "#4a4a4a" : "transparent")};
  ${(p) => p.$open && css`background-image: linear-gradient(#76b9ed, #76b9ed); background-size: ${p.$active ? 36 : 28}px 2px; background-position: center bottom; background-repeat: no-repeat;`}
`;

function Pic({ children }: { children: ReactNode }) {
  return <svg width="16" height="16" viewBox="0 0 48 48" fill="none">{children}</svg>;
}

function Tasks() {
  return (
    <>
      <Task><Pic><path d="M0 7l20-3v19H0zM22 4l26-4v23H22zM0 25h20v19L0 41zM22 25h26v23l-26-4z" fill="#fff" /></Pic></Task>
      <Task><Pic><circle cx="31" cy="17" r="15" stroke="#fff" strokeWidth="3.500" /><path d="M20 28L1 47" stroke="#fff" strokeWidth="3.500" /></Pic></Task>
      <Task><Pic><path d="M2 1v6h32V1M4 14h28v20H4zM2 47v-6h32v6M43 0v8M43 22v26" stroke="#fff" strokeWidth="3.200" /><path d="M39 11h8v8h-8z" fill="#fff" /></Pic></Task>
      <Task $ml={3}><Pic>
        <rect width="48" height="48" rx="3" fill="#ee7623" /><path d="M6 4h36" stroke="#fbd9c0" strokeWidth="2" />
        <rect x="6" y="10" width="36" height="30" rx="8" fill="#fff" />
        <path d="M14 18h5v4h-5zM29 18h5v4h-5zM14 29h5v4h-5zM29 29h5v4h-5z" fill="#ee7623" /><path d="M22 9h4v7l-2 3-2-3zM22 41h4v-7l-2-3-2 3zM5 23h5v4H5zM38 23h5v4h-5z" fill="#ee7623" />
      </Pic></Task>
      <Task $ml={1}><Pic><circle cx="24" cy="24" r="24" fill="#e95420" /><circle cx="25" cy="24" r="11" stroke="#fff" strokeWidth="4" /><circle cx="10" cy="24" r="5" fill="#fff" stroke="#e95420" strokeWidth="2" /><circle cx="32" cy="11" r="5" fill="#fff" stroke="#e95420" strokeWidth="2" /><circle cx="32" cy="37" r="5" fill="#fff" stroke="#e95420" strokeWidth="2" /></Pic></Task>
      <Task $ml={1}><Pic><circle cx="24" cy="24" r="24" fill="#1ed760" /><path d="M9 17c10-3 21-2 31 3M11 25c9-3 18-1 26 3M12 33c8-2 15-1 21 3" stroke="#191414" strokeWidth="4" strokeLinecap="round" /></Pic></Task>
      <Task $ml={1}><Pic>
        <defs><linearGradient id="eg" x1="0" y1="0" x2="1" y2=".5"><stop offset="0" stopColor="#2bb6f0" /><stop offset="1" stopColor="#57d46a" /></linearGradient></defs>
        <circle cx="24" cy="24" r="24" fill="#1570c8" /><path d="M1 18C6-6 46-6 48 22c0 11-16 13-20 7 3-4 2-15-9-15-9 0-15 2-18 4z" fill="url(#eg)" /><path d="M18 25c-3 13 12 20 26 13-6 10-20 13-28 7-7-6-6-17 2-20z" fill="#0c4a94" /><path d="M29 29c4 6 14 4 19-1-2 6-3 7-5 9-10 4-18-2-19-8 2-4 4-1 5 0z" fill="#1c1c1c" />
      </Pic></Task>
      <Task $ml={1}><Pic><circle cx="24" cy="24" r="21" fill="#fbc116" /><path d="M24 24L5.800 13.500A21 21 0 0 1 42.200 13.500H24z" fill="#ea4335" /><path d="M5.800 13.500A21 21 0 0 0 24 45l9-16-9-5-9 5z" fill="#34a853" /><circle cx="24" cy="24" r="10" fill="#fff" /><circle cx="24" cy="24" r="8" fill="#4285f4" /></Pic></Task>
      <Task $ml={1}><Pic><rect x="6" width="36" height="48" fill="#6b7680" /><rect x="11" y="4" width="26" height="8" fill="#5fd0f5" /><path d="M11 18h6v6h-6zM20 18h6v6h-6zM29 18h8v6h-8zM11 27h6v6h-6zM20 27h6v6h-6zM11 36h6v6h-6zM20 36h6v6h-6z" fill="#e5e9ec" /><path d="M29 27h8v15h-8z" fill="#123d70" /></Pic></Task>
      <Task $ml={1} $open><Pic><path d="M12 0h24l5 6 3 8-4 22-8 8-8 4-8-4-8-8L4 14l3-8z" fill="#fb4522" /><path d="M13 10l6 2h10l6-2 5 8-4 10-4 4 1 4-9 6-9-6 1-4-4-4-4-10z" fill="#fff" /><path d="M15 17l7 4-3 7 5 4 5-4-3-7 7-4-4 0-3 2h-4l-3-2z" fill="#fb4522" /></Pic></Task>
      <Task $ml={1}>
        <Pic><path d="M3 0h42v48H6l-5-5V2z" fill="#1d3fb5" /><path d="M13 0h24v15H13z" fill="#d9dee8" /><path d="M26 3h6v9h-6z" fill="#1d3fb5" /><path d="M6 21h36v23H6z" fill="#fff" /><path d="M20 26h-9v15h9v-8h-9M26 25v9h10M35 25v17" stroke="#333" strokeWidth="3.500" /></Pic>
      </Task>
      <Task $ml={1} $open><Pic><path d="M0 4h20l4 5h24v34H0z" fill="#d99a25" /><path d="M0 12h48v31H0z" fill="#ffd768" /><path d="M9 45V26h30v19h-9V35H18v10z" fill="#3f95dc" /></Pic></Task>
      <Task $ml={1} $open><Pic><rect x="11" y="6" width="37" height="31" fill="#c9ccd0" /><rect x="15" y="10" width="29" height="22" fill="#eef7fd" /><path d="M15 23l7-6 7 10 7-8 8 5" stroke="#2684c7" strokeWidth="3" /><path d="M25 37h8v5h8v5H17v-5h8z" fill="#aab0b5" /><rect y="17" width="9" height="27" fill="#b7bbbf" /><rect x="2" y="19" width="4" height="5" fill="#31c337" /></Pic></Task>
      <Task $ml={1} $open><Pic><path d="M35 0l13 5v38l-13 5L13 27 4 34l-4-2V16l4-2 9 7zM35 14L20 24l15 10zM4 20v8l5-4z" fill="#8a4fc7" fillRule="evenodd" /><path d="M35 0l13 5v38l-13 5z" fill="#b18be8" opacity=".6" /></Pic></Task>
      <Task $ml={1} $open><Pic><ellipse cx="20" cy="29" rx="20" ry="17" fill="#cfe4f4" /><circle cx="10" cy="27" r="4" fill="#3c8fd8" /><circle cx="18" cy="19" r="4" fill="#e94b35" /><circle cx="29" cy="20" r="4" fill="#f5c12e" /><circle cx="12" cy="36" r="4" fill="#45b649" /><circle cx="24" cy="32" r="4.500" fill="#4a5a66" /><path d="M36 16h9l-2 30h-5z" fill="#e08a2b" /><path d="M34 2h13l-2 13h-8z" fill="#9a6a45" /></Pic></Task>
      <Task $ml={1} $open $active><Pic><path d="M0 5l29-5v48L0 43z" fill="#1d7044" /><path d="M29 5h18v38H29z" fill="#fff" /><path d="M32 12h5M32 19h5M32 26h5M32 33h5M39 12h5M39 19h5M39 26h5M39 33h5" stroke="#1d7044" strokeWidth="3.500" /><path d="M8 14l12 20M20 14L8 34" stroke="#fff" strokeWidth="4.500" /></Pic></Task>
    </>
  );
}

function Tray() {
  const w = "#fff";
  return (
    <>
      <Icon box={[1104, 279, 66, 70]} ml={894}>
        <path d="M1137 308v32c0 8-12 8-12-1" stroke="#777" strokeWidth="5" />
        <path d="M1104 311c2-40 64-40 66 0z" fill="#4ba3ea" /><path d="M1124 311c1-20 6-30 13-30s12 10 13 30z" fill="#8fcaf8" /><path d="M1150 311c1-20-5-28-10-29 18 1 29 14 30 29z" fill="#2c82cf" />
      </Icon>
      <T w={65} ml={9} s={13} c={w}>Rain/snow</T>
      <Icon box={[164, 303, 38, 22]} ml={11}><path d="M166 322l17-17 17 17" stroke={w} strokeWidth="3.500" /></Icon>
      <Icon box={[238, 286, 36, 52]} ml={12}><path d="M241 301h22v23h-22zM263 309l9-5v17l-9-5M245 294c6-6 14-6 20 0M245 331c6 6 14 6 20 0" stroke={w} strokeWidth="3" /></Icon>
      <Icon box={[303, 288, 48, 48]} ml={10}><circle cx="327" cy="312" r="24" fill="#6bb536" /><path d="M316 297l5 19c2 8 11 8 13 1l-4-20M333 314c2 6 5 6 10 4M319 312l8 22" stroke={w} strokeWidth="7" /></Icon>
      <Icon box={[374, 291, 52, 42]} ml={8}><path d="M376 306h8l10-9v31l-10-9h-8zM400 305c4 5 4 10 0 15M407 299c7 8 7 18 0 26M415 293c10 12 10 26 0 38" stroke={w} strokeWidth="3" /></Icon>
      <Icon box={[456, 294, 40, 40]} ml={9}><g stroke={w} strokeWidth="3"><path d="M459 332c0-20 12-34 35-35M467 332c0-15 9-26 27-27M475 332c0-10 7-18 19-19M483 332c0-6 4-10 11-11" /></g><path d="M487 326h7v7h-7z" fill={w} /></Icon>
      <Icon box={[530, 287, 50, 48]} ml={11}><path d="M546 325l15-33c4-5 11-2 9 4l-16 30-10 6zM550 310c-12-4-22 4-16 12 8 8 24-2 30-8s12-4 8 4c-1 4 2 5 6 3" stroke={w} strokeWidth="3.200" /></Icon>
      <Icon box={[614, 291, 70, 40]} ml={12}><path d="M616 293h66v36h-66z" stroke={w} strokeWidth="3" /><path d="M622 302h54M622 311h54" stroke={w} strokeWidth="4" strokeDasharray="4 3" /><path d="M630 321h38" stroke={w} strokeWidth="3.500" /></Icon>
      <T w={26} ml={10} s={11.5} c={w}>HUN</T>
      <T w={42} ml={14} s={11.5} c={w}>8:48 PM</T>
      <Icon box={[1026, 288, 48, 48]} ml={22}><path d="M1026 288h48v37h-16l-8 10-8-10h-16z" fill={w} /><path d="M1034 298h32M1034 307h32M1034 316h20" stroke="#1c1c1c" strokeWidth="3" /></Icon>
      <Sep $h={30} $ml={20} />
    </>
  );
}

const ZoomLine = styled.div`
  width: 96px;
  height: 5px;
  background: linear-gradient(90deg, transparent 46px, #999 46px 47px, transparent 47px), linear-gradient(transparent 2px, #aaa 2px 3px, transparent 3px);
`;
const Knob = styled.div`
  width: 4px;
  height: 11px;
  margin-left: 4px;
  background: #666;
`;

export default function App() {
  return (
    <Screen>
      <Global />
      <LeftEdge />
      <Window>
        <TopBar />
        <Ribbon>
          <Clipboard /><Sep $h={84} $mt={4} />
          <FontGroup /><Sep $h={84} $mt={4} />
          <AlignGroup /><Sep $h={84} $mt={4} />
          <NumberGroup /><Sep $h={84} $mt={4} />
          <StyleGroup /><Sep $h={84} $mt={4} />
          <CellGroup /><Sep $h={84} $mt={4} />
          <EditGroup /><Sep $h={84} $mt={4} />
          <RibbonEnd><Icon box={[0, 0, 27, 18]}><path d="M2 16L13.500 5 25 16" stroke="#666" strokeWidth="5" /></Icon></RibbonEnd>
        </Ribbon>
        <FormulaBar>
          <Box $w={102}><T w={61} ml={6} s={13}>Diagram 1</T><Arrow $big $ml={19} $mt={-1} /></Box>
          <Dots $ml={14} />
          <Box $w={110} $ml={14}>
            <Icon box={[0, 0, 33, 33]} ml={12}><path d="M2 3l29 27M31 3L2 30" stroke="#c3c3c3" strokeWidth="4.500" /></Icon>
            <Icon box={[0, 0, 40, 33]} ml={25}><path d="M2 18l11 11L37 3" stroke="#c3c3c3" strokeWidth="5.500" /></Icon>
            <T w={6} ml={23} s={15} i b={700} c="#666" f={`"Liberation Serif", serif`}>f</T>
            <T w={6} s={11} i b={700} c="#555" f={`"Liberation Serif", serif`}>x</T>
          </Box>
          <Box $ml={3}>
            <Spacer />
            <Svg $ml={0} style={{ marginRight: 4 }} width="8" height="6" viewBox="0 0 24 18" fill="none"><path d="M2 3l10 9 10-9" stroke="#666" strokeWidth="5" /></Svg>
          </Box>
        </FormulaBar>
        <ColumnHeads />
        <SheetArea>
          <RowHeads />
          <Chart />
          <VScroll>
            <ScrollBtn><Icon box={[0, 0, 21, 12]}><path d="M0 11L10.500 1 21 11z" fill="#666" /></Icon></ScrollBtn>
            <VThumb />
            <Spacer />
            <ScrollBtn><Icon box={[0, 0, 21, 12]}><path d="M0 1l10.500 10L21 1z" fill="#666" /></Icon></ScrollBtn>
          </VScroll>
        </SheetArea>
        <SheetTabs>
          <Icon box={[90, 148, 13, 20]} ml={27} mt={-3}><path d="M102 148v20l-12-10z" fill="#bbb" /></Icon>
          <Icon box={[177, 148, 13, 20]} ml={25} mt={-3}><path d="M177 148v20l12-10z" fill="#bbb" /></Icon>
          <SheetTab><T w={46} s={12.5} b={700} c="#217346">write10</T></SheetTab>
          <Icon box={[614, 135, 50, 50]} ml={33} mt={-2}><circle cx="639" cy="160" r="23" stroke="#777" strokeWidth="3" /><path d="M639 149v22M628 160h22" stroke="#777" strokeWidth="5" /></Icon>
          <Dots $ml={934} />
          <ScrollBtn $ml={14}><Icon box={[0, 0, 12, 21]}><path d="M12 0v21L1 10.500z" fill="#666" /></Icon></ScrollBtn>
          <HThumb />
          <ScrollBtn $ml={3}><Icon box={[0, 0, 12, 21]}><path d="M0 0v21l11-10.500z" fill="#666" /></Icon></ScrollBtn>
        </SheetTabs>
        <Status>
          <T w={22} ml={7} s={11}>Kész</T>
          <ViewBtn $on $ml={1599}><Icon box={[308, 213, 40, 39]}><path d="M310 214h36v36h-36zM310 226h36M310 238h36M322 214v36M334 214v36" stroke="#666" strokeWidth="3" /></Icon></ViewBtn>
          <ViewBtn><Icon box={[423, 213, 42, 40]}><path d="M425 214h38v37h-38zM433 221h22v23h-22zM437 228h14M437 233h14M437 238h14" stroke="#666" strokeWidth="3" /></Icon></ViewBtn>
          <ViewBtn><Icon box={[537, 213, 42, 40]}><path d="M539 214h38v37h-38zM550 214v23h15M565 214v23M539 237h26" stroke="#666" strokeWidth="3" /></Icon></ViewBtn>
          <Icon box={[0, 0, 18, 6]} ml={5}><path d="M0 3h18" stroke="#666" strokeWidth="5" /></Icon>
          <Knob />
          <ZoomLine />
          <Icon box={[0, 0, 25, 25]} ml={4}><path d="M0 12.500h25M12.500 0v25" stroke="#666" strokeWidth="5" /></Icon>
          <T w={21} ml={15} s={11}>10%</T>
        </Status>
        <Taskbar>
          <Tasks />
          <Tray />
        </Taskbar>
      </Window>
      <RightEdge />
    </Screen>
  );
}
